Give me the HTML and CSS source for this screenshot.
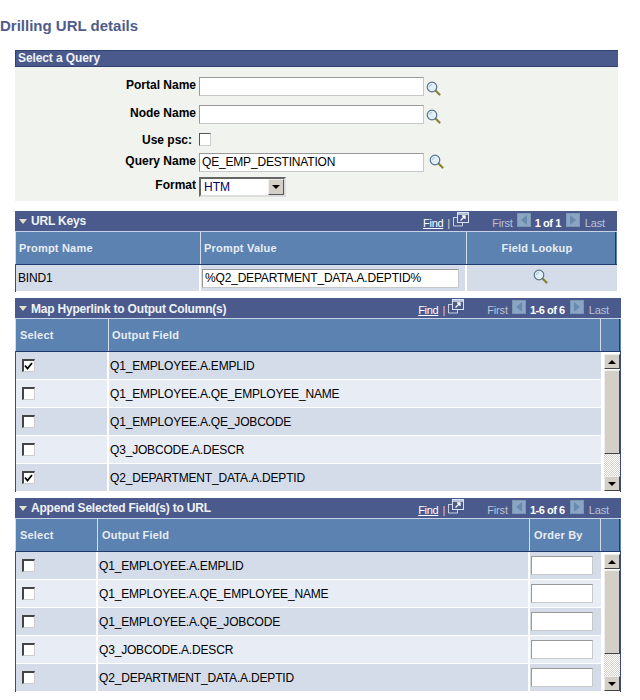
FILE: index.html
```html
<!DOCTYPE html>
<html lang="en">
<head>
<meta charset="utf-8">
<title>Drilling URL details</title>
<link rel="stylesheet" href="styles.css">
</head>
<body>
<svg class="defs" width="0" height="0" aria-hidden="true">
  <defs>
    <symbol id="lens" viewBox="0 0 15 15">
      <path d="M9.500 9.500l4 4" stroke="#8a8030" stroke-width="2.200" stroke-linecap="round"/>
      <circle cx="6" cy="6" r="4.800" fill="#e2eff6" stroke="#567389" stroke-width="1.200"/>
      <path d="M3.500 6a2.500 2.500 0 0 1 2.500-2.500" fill="none" stroke="#a3c6da" stroke-width="1"/>
    </symbol>
    <symbol id="newwin" viewBox="0 0 16 15">
      <path d="M1 5.500h4M.5 5v9h9v-4" fill="none" stroke="#c7d2e6"/>
      <rect x="4.500" y=".5" width="11" height="10" fill="#4a5a8c" stroke="#dbe3f0"/>
      <path d="M4.500 2h11" stroke="#dbe3f0" stroke-width="1.500"/>
      <path d="M7.500 8.500l4-4M9 4h3v3" fill="none" stroke="#fff" stroke-width="1.300"/>
    </symbol>
  </defs>
</svg>

<h1 class="page-title">Drilling URL details</h1>

<section class="query">
  <h2 class="bar">Select a Query</h2>
  <div class="query-form">
    <div class="field f-portal">
      <label class="lab">Portal Name</label>
      <input class="txt" type="text">
      <svg class="lens"><use href="#lens"/></svg>
    </div>
    <div class="field f-node">
      <label class="lab">Node Name</label>
      <input class="txt" type="text">
      <svg class="lens"><use href="#lens"/></svg>
    </div>
    <div class="field f-psc">
      <label class="lab">Use psc:</label>
      <span class="cb"></span>
    </div>
    <div class="field f-query">
      <label class="lab">Query Name</label>
      <input class="txt" type="text" value="QE_EMP_DESTINATION">
      <svg class="lens lens-q"><use href="#lens"/></svg>
    </div>
    <div class="field f-format">
      <label class="lab">Format</label>
      <span class="sel"><span class="sel-val">HTM</span><span class="sel-btn"><i class="tri-down"></i></span></span>
    </div>
  </div>
</section>

<section class="grid keys">
  <div class="grid-bar">
    <span class="disc"></span><h2 class="grid-title">URL Keys</h2>
    <span class="nav">
      <a class="find">Find</a><span class="pipe">|</span><svg class="newwin"><use href="#newwin"/></svg>
      <span class="dim first">First</span><span class="arrow"><i class="tri-left"></i></span><b class="count">1 of 1</b><span class="arrow arrow-next"><i class="tri-right"></i></span><span class="dim">Last</span>
    </span>
  </div>
  <div class="cols cols-keys head">
    <div class="th">Prompt Name</div><div class="th">Prompt Value</div><div class="th th-c">Field Lookup</div>
  </div>
  <div class="cols cols-keys row">
    <div class="td">BIND1</div>
    <div class="td td-in"><input class="txt prompt" type="text" value="%Q2_DEPARTMENT_DATA.A.DEPTID%"></div>
    <div class="td td-c"><svg class="lens"><use href="#lens"/></svg></div>
  </div>
</section>

<section class="grid map">
  <div class="grid-bar">
    <span class="disc"></span><h2 class="grid-title">Map Hyperlink to Output Column(s)</h2>
    <span class="nav">
      <a class="find">Find</a><span class="pipe">|</span><svg class="newwin"><use href="#newwin"/></svg>
      <span class="dim first">First</span><span class="arrow"><i class="tri-left"></i></span><b class="count">1-6 of 6</b><span class="arrow arrow-next"><i class="tri-right"></i></span><span class="dim">Last</span>
    </span>
  </div>
  <div class="cols cols-map head">
    <div class="th">Select</div><div class="th th-field">Output Field</div><div class="th"></div>
  </div>
  <div class="scroller">
    <div class="rows">
      <div class="cols cols-map2 row"><div class="td td-cb"><span class="cb on"><svg class="tick" viewBox="0 0 9 9"><path d="M1 4l2.500 3L8 1.500" fill="none" stroke="#000" stroke-width="1.800"/></svg></span></div><div class="td">Q1_EMPLOYEE.A.EMPLID</div></div>
      <div class="cols cols-map2 row alt"><div class="td td-cb"><span class="cb on"></span></div><div class="td">Q1_EMPLOYEE.A.QE_EMPLOYEE_NAME</div></div>
      <div class="cols cols-map2 row"><div class="td td-cb"><span class="cb on"></span></div><div class="td">Q1_EMPLOYEE.A.QE_JOBCODE</div></div>
      <div class="cols cols-map2 row alt"><div class="td td-cb"><span class="cb on"></span></div><div class="td">Q3_JOBCODE.A.DESCR</div></div>
      <div class="cols cols-map2 row"><div class="td td-cb"><span class="cb on"><svg class="tick" viewBox="0 0 9 9"><path d="M1 4l2.500 3L8 1.500" fill="none" stroke="#000" stroke-width="1.800"/></svg></span></div><div class="td">Q2_DEPARTMENT_DATA.A.DEPTID</div></div>
    </div>
    <div class="sb">
      <span class="sb-btn"><i class="tri-up"></i></span>
      <span class="sb-thumb"></span>
      <span class="sb-track"></span>
      <span class="sb-btn"><i class="tri-down"></i></span>
    </div>
  </div>
</section>

<section class="grid append">
  <div class="grid-bar">
    <span class="disc"></span><h2 class="grid-title">Append Selected Field(s) to URL</h2>
    <span class="nav">
      <a class="find">Find</a><span class="pipe">|</span><svg class="newwin"><use href="#newwin"/></svg>
      <span class="dim first">First</span><span class="arrow"><i class="tri-left"></i></span><b class="count">1-6 of 6</b><span class="arrow arrow-next"><i class="tri-right"></i></span><span class="dim">Last</span>
    </span>
  </div>
  <div class="cols cols-app head">
    <div class="th">Select</div><div class="th">Output Field</div><div class="th th-order">Order By</div><div class="th"></div>
  </div>
  <div class="scroller">
    <div class="rows">
      <div class="cols cols-app2 row"><div class="td td-cb"><span class="cb on"></span></div><div class="td">Q1_EMPLOYEE.A.EMPLID</div><div class="td td-in2"><input class="txt order" type="text"></div></div>
      <div class="cols cols-app2 row alt"><div class="td td-cb"><span class="cb on"></span></div><div class="td">Q1_EMPLOYEE.A.QE_EMPLOYEE_NAME</div><div class="td td-in2"><input class="txt order" type="text"></div></div>
      <div class="cols cols-app2 row"><div class="td td-cb"><span class="cb on"></span></div><div class="td">Q1_EMPLOYEE.A.QE_JOBCODE</div><div class="td td-in2"><input class="txt order" type="text"></div></div>
      <div class="cols cols-app2 row alt"><div class="td td-cb"><span class="cb on"></span></div><div class="td">Q3_JOBCODE.A.DESCR</div><div class="td td-in2"><input class="txt order" type="text"></div></div>
      <div class="cols cols-app2 row"><div class="td td-cb"><span class="cb on"></span></div><div class="td">Q2_DEPARTMENT_DATA.A.DEPTID</div><div class="td td-in2"><input class="txt order" type="text"></div></div>
    </div>
    <div class="sb">
      <span class="sb-btn"><i class="tri-up"></i></span>
      <span class="sb-thumb"></span>
      <span class="sb-track"></span>
      <span class="sb-btn"><i class="tri-down"></i></span>
    </div>
  </div>
</section>
</body>
</html>
```

FILE: styles.css
```css
* { box-sizing: border-box; }
html, body { margin: 0; padding: 0; background: #fff; }
body { width: 640px; height: 700px; overflow: hidden; font: 12px "Liberation Sans", Arial, sans-serif; color: #000; }
.defs { position: absolute; }
.page-title { margin: 0; padding: 18px 0 0; height: 50px; font-size: 15px; line-height: 16px; font-weight: bold; color: #4f5b8c; }

.query { width: 603px; margin-left: 15px; background: #f1f3ee; height: 151px; }
.bar { margin: 0; height: 17px; padding-left: 2px; font-size: 12px; line-height: 15px; letter-spacing: -.1px; font-weight: bold; color: #f0f2f6; background: #4a5a8c; border: 1px solid #2f4272; border-width: 1px 0 1px 1px; }
.query-form { padding-top: 10px; }
.field { display: flex; align-items: flex-start; }
.lab { flex: none; width: 184px; padding-right: 3px; text-align: right; font-weight: bold; line-height: 14px; color: #000; }
.f-portal, .f-node { height: 28px; }
.f-portal .lab, .f-node .lab, .f-query .lab, .f-format .lab { padding-top: 1px; }
.f-psc { height: 20px; }
.f-psc .lab { padding-right: 7px; }
.f-query { height: 24px; }
.txt { display: block; height: 19px; padding: 0 2px 1px; margin: 0; font: 12px "Liberation Sans", Arial, sans-serif; letter-spacing: -.18px; color: #000; background: #fff; border: 1px solid; border-color: #999 #c8c8c8 #c8c8c8 #999; border-radius: 0; outline: 0; }
.query-form .txt { width: 225px; }
.lens { display: block; width: 15px; height: 15px; margin: 4px 0 0 2px; flex: none; }
.lens-q { margin-left: 5px; margin-top: 1px; }
.cb { display: block; width: 12px; height: 13px; background: #fff; border: 1px solid; border-color: #555 #ccc #ccc #555; }
.sel { display: flex; width: 87px; height: 20px; background: #fff; border: 2px solid; border-color: #666 #ddd #ddd #666; }
.sel-val { flex: 1; padding-left: 3px; color: #000066; line-height: 16px; }
.sel-btn { width: 16px; display: flex; align-items: center; justify-content: center; background: #d4d0c8; border: 1px solid; border-color: #eee #555 #555 #eee; }

.tri-down, .tri-up, .tri-left, .tri-right { display: block; width: 0; height: 0; border-style: solid; border-color: transparent; }
.tri-down { border-width: 4px 4px 0; border-top-color: #000; }
.tri-up { border-width: 0 4px 4px; border-bottom-color: #000; }
.tri-left { border-width: 5px 6px 5px 0; border-right-color: #6a8bb0; }
.tri-right { border-width: 5px 0 5px 6px; border-left-color: #6a8bb0; }

.grid { margin-left: 15px; border-left: 1px solid #3a4c7e; }
.keys { margin-top: 10px; width: 602px; }
.map { margin-top: 6px; width: 606px; }
.append { margin-top: 6px; width: 606px; }
.grid-bar { display: flex; align-items: center; height: 21px; margin-left: -1px; background: #4a5a8c; padding-left: 4px; border-bottom: 1px solid #c7d3e6; }
.disc { width: 0; height: 0; border-style: solid; border-width: 5px 4.500px 0; border-color: #e4e2cc transparent transparent; margin-right: 4px; margin-top: 1px; flex: none; }
.grid-title { margin: 0; font-size: 12px; line-height: 14px; letter-spacing: -.2px; font-weight: bold; color: #f0f2f6; }
.map .grid-title { margin-top: 1px; }
.nav { margin-left: auto; display: flex; align-items: center; font-size: 11px; color: #fff; padding-right: 12px; }
.find { color: #fff; text-decoration: underline; letter-spacing: -.3px; margin-top: 3px; }
.pipe { margin: 3px 3px 0 4px; color: #e8c8c0; }
.newwin { width: 16px; height: 15px; display: block; margin-top: -3px; }
.dim { color: #b9c3da; letter-spacing: -.15px; margin-top: 3px; }
.dim.first { margin-left: 23px; }
.arrow { display: flex; align-items: center; justify-content: center; width: 14px; height: 14px; margin: -2px 4px 0 4px; background: #8ba5c4; border: 1px solid #7d97b6; }
.arrow-next { margin-right: 5px; }
.count { color: #fff; letter-spacing: -.45px; margin: 3px 1px 0 0; }

.cols { display: grid; }
.cols-keys { grid-template-columns: 185px 266px 149px; }
.cols-map { grid-template-columns: 93px 492px 19px; }
.cols-app { grid-template-columns: 82px 432px 71px 19px; }
.cols-map2 { grid-template-columns: 93px 1fr; }
.cols-app2 { grid-template-columns: 82px 1fr 71px; }

.head { height: 33px; background: #5b82b0; border-bottom: 1px solid #1e3a6e; }
.th { display: flex; align-items: center; padding-left: 3px; font-weight: bold; font-size: 11px; letter-spacing: .2px; color: #e8edf5; border-right: 1px solid #1e3a6e; border-left: 1px solid #d4dcea; margin-left: -1px; }
.map .th, .append .th { padding-left: 4px; }
.map .th-field { padding-left: 3px; }
.th-c { justify-content: center; padding: 0 8px 0 0; }

.row { height: 28px; background: #d5dce9; border-bottom: 1px solid #fff; }
.keys .row { height: 27px; }
.row.alt { background: #e7ecf5; }
.td { display: flex; align-items: center; padding-left: 1px; letter-spacing: -.18px; border-right: 2px solid #fff; white-space: nowrap; }
.td:last-child { border-right: 0; }
.keys .td:first-child { padding-left: 2px; }
.td-cb { padding-left: 6px; }
.td-c { justify-content: center; padding: 0 2px 0 0; }
.td-c .lens { margin: 0 0 3px; }
.prompt { width: 257px; height: 19px; }
.td-in2 { padding-left: 1px; }
.order { width: 62px; height: 19px; }
.cb.on { width: 13px; border-color: #444 #ccc #ccc #444; border-width: 2px 1px 1px 2px; }
.tick { display: block; width: 9px; height: 10px; }

.scroller { display: flex; border-right: 1px solid #3a4c7e; }
.rows { width: 585px; }
.sb { width: 16px; margin-left: 3px; margin-top: 2px; height: 137px; display: flex; flex-direction: column; }
.sb-btn { height: 15px; flex: none; display: flex; align-items: center; justify-content: center; background: #d4d0c8; border: 1px solid; border-color: #eee #444 #444 #eee; }
.sb-thumb { flex: none; height: 84px; margin-top: 1px; background: #d4d0c8; border: 1px solid; border-color: #eee #444 #444 #eee; }
.sb-track { flex: 1; background: repeating-conic-gradient(#d4d0c8 0 25%, #fff 0 50%) 0 0 / 2px 2px; }
```
